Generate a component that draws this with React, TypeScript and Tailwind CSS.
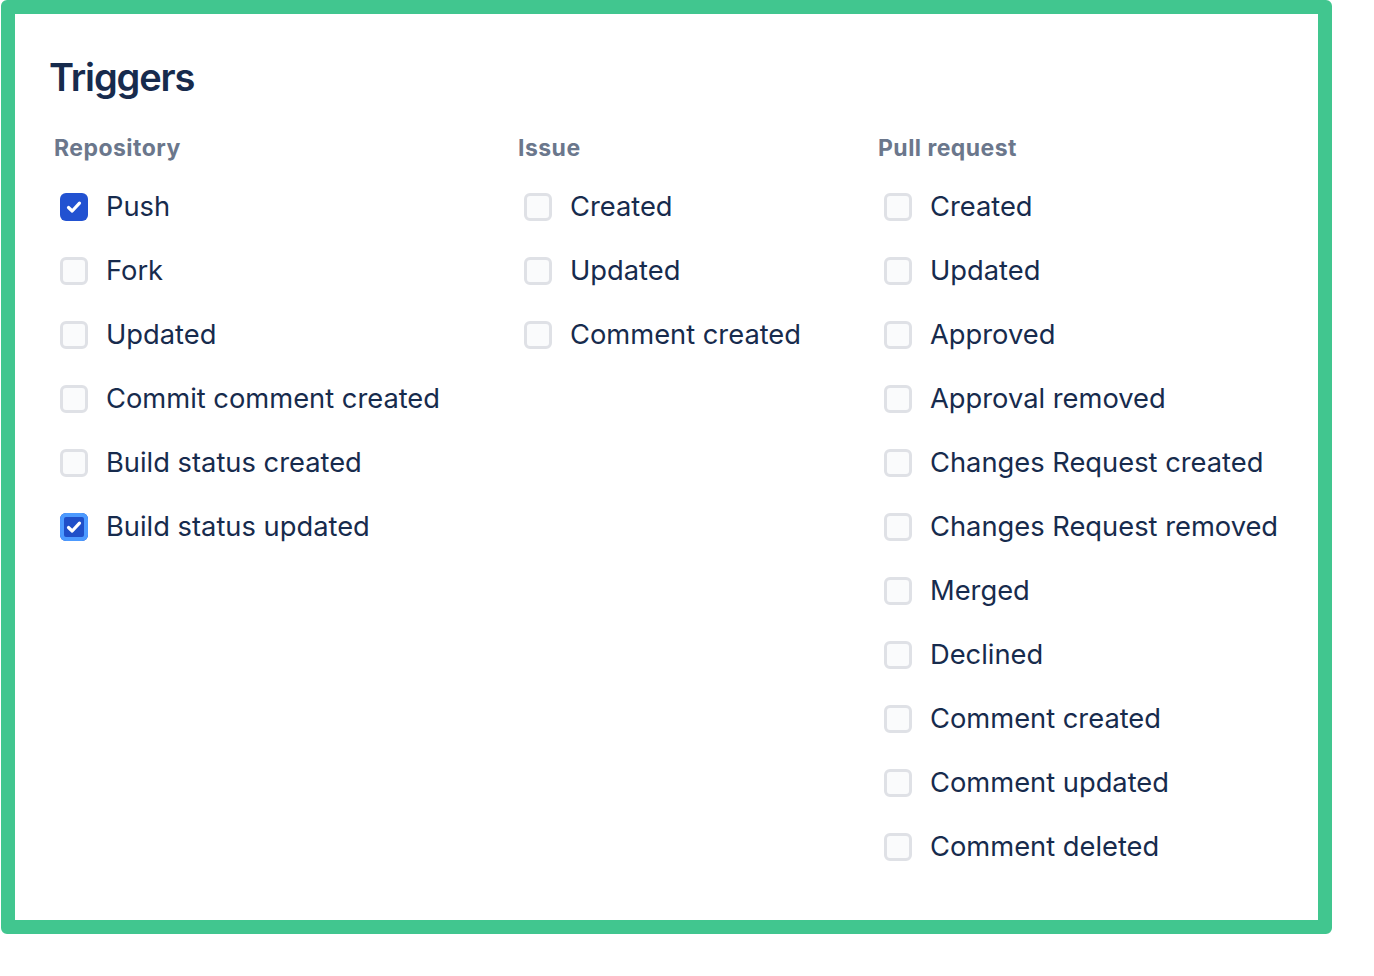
import React from "react";

type Item = { label: string; checked?: boolean; focused?: boolean };

const COLUMNS: { title: string; width: string; items: Item[] }[] = [
  {
    title: "Repository",
    width: "w-[464px]",
    items: [
      { label: "Push", checked: true },
      { label: "Fork" },
      { label: "Updated" },
      { label: "Commit comment created" },
      { label: "Build status created" },
      { label: "Build status updated", checked: true, focused: true },
    ],
  },
  {
    title: "Issue",
    width: "w-[360px]",
    items: [{ label: "Created" }, { label: "Updated" }, { label: "Comment created" }],
  },
  {
    title: "Pull request",
    width: "w-[420px]",
    items: [
      { label: "Created" },
      { label: "Updated" },
      { label: "Approved" },
      { label: "Approval removed" },
      { label: "Changes Request created" },
      { label: "Changes Request removed" },
      { label: "Merged" },
      { label: "Declined" },
      { label: "Comment created" },
      { label: "Comment updated" },
      { label: "Comment deleted" },
    ],
  },
];

function Box({ checked, focused }: { checked?: boolean; focused?: boolean }) {
  if (checked) {
    return (
      <span
        className={`flex h-[28px] w-[28px] shrink-0 items-center justify-center rounded-[6px] ${
          focused ? "bg-[#1f4fc9] ring-[4px] ring-inset ring-[#4c9aff]" : "bg-[#2252d1]"
        }`}
      >
        <svg width="16" height="14" viewBox="0 0 16 14" fill="none">
          <path
            d="M2.5 7.5 L6.2 11 L13.5 3.2"
            stroke="white"
            strokeWidth="3.2"
            strokeLinecap="round"
            strokeLinejoin="round"
          />
        </svg>
      </span>
    );
  }
  return (
    <span className="h-[28px] w-[28px] shrink-0 rounded-[6px] border-[3px] border-[#dfe1e6] bg-[#fafbfc]" />
  );
}

export default function App() {
  return (
    <div className="min-h-screen bg-white font-['Inter',sans-serif]">
      <div className="ml-px h-[934px] w-[1331px] rounded-[6px] border-[14px] border-[#41c68f] bg-white pl-[36px] pt-[39px]">
        <h1 className="-ml-[2px] text-[38px] leading-[48px] font-semibold tracking-[-0.03em] text-[#172b4d]">
          Triggers
        </h1>
        <div className="mt-[33px] flex pl-[3px]">
          {COLUMNS.map((col) => (
            <div key={col.title} className={col.width}>
              <div className="text-[23px] leading-[28px] font-bold tracking-[0.02em] text-[#6b778c]">
                {col.title}
              </div>
              <ul className="mt-[13px] pl-[6px]">
                {col.items.map((it) => (
                  <li key={it.label} className="flex h-[64px] items-center gap-[18px]">
                    <Box checked={it.checked} focused={it.focused} />
                    <span className="whitespace-nowrap text-[27.3px] leading-none text-[#172b4d]">
                      {it.label}
                    </span>
                  </li>
                ))}
              </ul>
            </div>
          ))}
        </div>
      </div>
    </div>
  );
}
